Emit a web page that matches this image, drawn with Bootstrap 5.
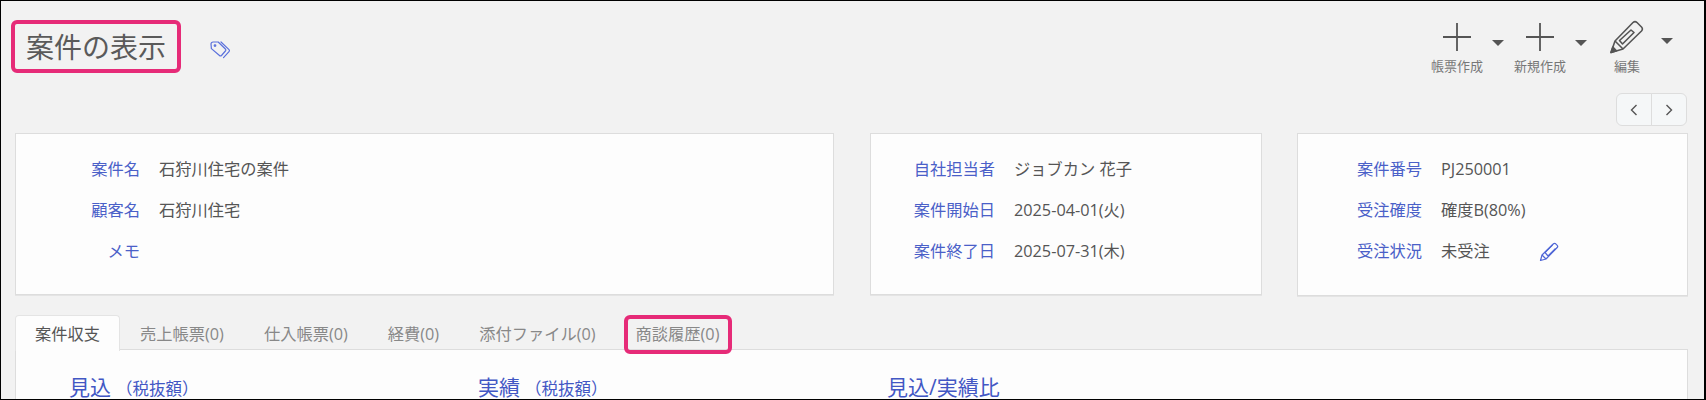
<!doctype html>
<html lang="ja">
<head>
<meta charset="utf-8">
<title>案件の表示</title>
<link rel="stylesheet" href="https://cdn.jsdelivr.net/npm/bootstrap@5.3.0/dist/css/bootstrap.min.css">
<style>
html,body{height:400px;overflow:hidden}
body{background:#000;font-family:"Open Sans","Noto Sans CJK JP",sans-serif;color:#555;font-size:16.25px}
.frame{height:400px;border:1px solid #000;border-width:1px 2px 1px 1px;background:#f2f2f2;overflow:hidden}
.topbar{height:92px;padding:19px 31px 0 10px}
.pagehead{border:4px solid #e62b78;border-radius:6px;height:53px;width:170px;padding:0 11px;font-size:28px;line-height:46px;font-weight:400;color:#5a5a5a;margin:0;white-space:nowrap}
.tagicon{margin:21px 0 0 29px;color:#5a70dc}
.toolmain{width:52px;font-size:13px;color:#777;line-height:18px}
.toolmain svg{display:block;margin:3px auto 6px}
.toolmain svg.bigpen{margin:0 auto 3px}
.caretmark{width:0;height:0;border-left:6px solid transparent;border-right:6px solid transparent;border-top:6px solid #555;margin:20px 10px 0 9px}
.caretmark.last{margin:18px 0 0 8px}
.caretmark.mid{margin-right:14px}
.pagerow{height:40px;padding-right:17px}
.pagerbtn{width:36px;height:33px;padding:0;background:#f5f7f8;border:1px solid #ddd;color:#555;display:flex;align-items:center;justify-content:center}
.pagerbtn:hover{background:#f5f7f8;border-color:#ddd}
.cardsrow{padding:0 16px 0 14px;height:182px}
.infocard{height:162px;border:1px solid #ddd;border-radius:0;background:#fdfdfd;padding:15px 0 0;box-shadow:0 1px 0 #e4e4e4}
.c1{width:819px}.c2{width:392px;margin-left:36px}.c3{width:391px;margin-left:35px;height:163px}
.inforow{height:41px;align-items:center}
.lbl{color:#4a60c8;text-align:right;margin-right:19px;white-space:nowrap;width:124px}
.val{white-space:nowrap;color:#555}
.editicon{margin-left:49px;color:#4f66d6}
.tabwrap{padding:0 16px 0 14px}
.nav-tabs.tabsline{border-bottom:1px solid #ddd;height:35px;flex-wrap:nowrap}
.tabsline .nav-link{border:1px solid transparent;border-bottom:0;border-radius:4px 4px 0 0;padding:0 19px;height:35px;line-height:36px;color:#888;margin:0;white-space:nowrap}
.tabsline .nav-link.active{background:#fdfdfd;color:#555;border-color:#e4e4e4;margin-bottom:-1px;height:36px}
.tabsline .flagged .nav-link{border:4px solid #e62b78;border-radius:6px;height:39px;line-height:30px;padding:0 9px 0 8px;margin-left:8px;color:#888}
.panel{background:#fdfdfd;border:1px solid #ddd;border-top:0;height:60px;padding:23px 0 0 53px}
.sumhead{font-size:21px;line-height:28px;color:#4257c4;white-space:nowrap}
.sumhead small{font-size:16.5px;margin-left:5px}
.s1{width:409px}.s2{width:409px}
</style>
</head>
<body>
<div class="frame">
  <div class="topbar d-flex justify-content-between align-items-start">
    <div class="d-flex align-items-start">
      <h1 class="pagehead">案件の表示</h1>
      <svg class="tagicon" width="21" height="18" viewBox="0 0 21 18" fill="none" stroke="currentColor" stroke-width="1.2" stroke-linejoin="round" stroke-linecap="round"><path d="M1 3a2 2 0 0 1 2-2h5.200l7.200 7a1.400 1.400 0 0 1 0 2L11.500 14.500a1.400 1.400 0 0 1-2 0L1.400 7.600z"/><circle cx="5" cy="4.600" r=".8"/><path d="M11 1l8 7.600a1.400 1.400 0 0 1 0 2L13.500 16.600"/></svg>
    </div>
    <div class="d-flex align-items-start">
      <div class="toolmain text-center text-nowrap">
        <svg width="28" height="28" viewBox="0 0 28 28" stroke="#555" stroke-width="1.8"><path d="M0 14h28M14 0v28"/></svg>帳票作成
      </div>
      <span class="caretmark"></span>
      <div class="toolmain text-center text-nowrap">
        <svg width="28" height="28" viewBox="0 0 28 28" stroke="#555" stroke-width="1.8"><path d="M0 14h28M14 0v28"/></svg>新規作成
      </div>
      <span class="caretmark mid"></span>
      <div class="toolmain text-center text-nowrap">
        <svg class="bigpen" width="34" height="34" viewBox="0 0 34 34" fill="none" stroke="#555" stroke-width="1.600" stroke-linejoin="round"><path d="M1 32.500 5 21 23 2.500a3 3 0 0 1 4 0l4.500 4.500a3 3 0 0 1 0 4L13 29z"/><path d="M9.500 20.500 21 10l3 2.500L12.500 24z"/><path d="M5 21l8 8"/><path d="M1 32.500 2.800 27l3.700 3.700z" fill="#555"/></svg>編集
      </div>
      <span class="caretmark last"></span>
    </div>
  </div>
  <div class="pagerow d-flex justify-content-end">
    <div class="btn-group" role="group" style="height:33px">
      <button class="btn pagerbtn" type="button" aria-label="前へ"><svg width="8" height="12" viewBox="0 0 8 12" fill="none" stroke="#555" stroke-width="1.400"><path d="M6.500 1 1.500 6l5 5"/></svg></button>
      <button class="btn pagerbtn" type="button" aria-label="次へ"><svg width="8" height="12" viewBox="0 0 8 12" fill="none" stroke="#555" stroke-width="1.400"><path d="M1.500 1l5 5-5 5"/></svg></button>
    </div>
  </div>
  <div class="cardsrow d-flex align-items-start">
    <div class="card infocard c1">
      <div class="d-flex inforow"><span class="lbl">案件名</span><span class="val">石狩川住宅の案件</span></div>
      <div class="d-flex inforow"><span class="lbl">顧客名</span><span class="val">石狩川住宅</span></div>
      <div class="d-flex inforow"><span class="lbl">メモ</span></div>
    </div>
    <div class="card infocard c2">
      <div class="d-flex inforow"><span class="lbl">自社担当者</span><span class="val">ジョブカン 花子</span></div>
      <div class="d-flex inforow"><span class="lbl">案件開始日</span><span class="val">2025-04-01(火)</span></div>
      <div class="d-flex inforow"><span class="lbl">案件終了日</span><span class="val">2025-07-31(木)</span></div>
    </div>
    <div class="card infocard c3">
      <div class="d-flex inforow"><span class="lbl">案件番号</span><span class="val">PJ250001</span></div>
      <div class="d-flex inforow"><span class="lbl">受注確度</span><span class="val">確度B(80%)</span></div>
      <div class="d-flex inforow"><span class="lbl">受注状況</span><span class="val">未受注</span>
        <svg class="editicon" width="20" height="20" viewBox="0 0 20 20" fill="none" stroke="currentColor" stroke-width="1.200" stroke-linejoin="round"><path d="M1.500 18.500 3 13 14.500 1.800a1.600 1.600 0 0 1 2.200 0l1.500 1.500a1.600 1.600 0 0 1 0 2.200L7 17z"/><path d="M3 13l4 4M6 10.500l7.500-7.500M9 14l7.500-7.500M6 10.500 9 14"/></svg>
      </div>
    </div>
  </div>
  <div class="tabwrap">
    <ul class="nav nav-tabs tabsline">
      <li class="nav-item"><a class="nav-link active" href="#">案件収支</a></li>
      <li class="nav-item"><a class="nav-link" href="#">売上帳票(0)</a></li>
      <li class="nav-item"><a class="nav-link" href="#">仕入帳票(0)</a></li>
      <li class="nav-item"><a class="nav-link" href="#">経費(0)</a></li>
      <li class="nav-item"><a class="nav-link" href="#">添付ファイル(0)</a></li>
      <li class="nav-item flagged"><a class="nav-link" href="#">商談履歴(0)</a></li>
    </ul>
    <div class="panel d-flex">
      <div class="sumhead s1">見込<small>（税抜額）</small></div>
      <div class="sumhead s2">実績<small>（税抜額）</small></div>
      <div class="sumhead">見込/実績比</div>
    </div>
  </div>
</div>
</body>
</html>
